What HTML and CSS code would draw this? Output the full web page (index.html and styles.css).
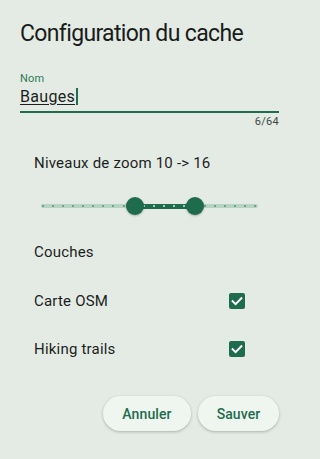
FILE: index.html
```html
<!DOCTYPE html>
<html lang="fr">
<head>
<meta charset="utf-8">
<link rel="stylesheet" href="styles.css">
</head>
<body>
<div class="dialog">
  <h1 class="title">Configuration du cache</h1>
  <div class="field">
    <div class="field-label">Nom</div>
    <div class="field-input"><span class="field-value">Bauges</span><span class="caret"></span></div>
    <div class="field-counter">6/64</div>
  </div>
  <div class="section-label zoom-label">Niveaux de zoom 10 -&gt; 16</div>
  <div class="slider">
    <div class="track">
      <div class="track-active" style="left:93.5px;width:60.8px"></div>
      <div class="dots">
        <i></i><i></i><i></i><i></i><i></i><i></i><i></i><i></i><i></i>
        <i class="on"></i><i class="on"></i><i class="on"></i><i class="on"></i><i class="on"></i><i class="on"></i><i class="on"></i>
        <i></i><i></i><i></i><i></i><i></i><i></i>
      </div>
      <div class="thumb" style="left:93.5px"></div>
      <div class="thumb" style="left:154.3px"></div>
    </div>
  </div>
  <div class="section-label layers-label">Couches</div>
  <div class="row">
    <span class="row-text">Carte OSM</span>
    <span class="checkbox"><svg viewBox="0 0 16 16" width="16" height="16"><path d="M3.6 8.2 L6.6 11.1 L12.4 5.2" fill="none" stroke="#fff" stroke-width="1.9" stroke-linecap="square"/></svg></span>
  </div>
  <div class="row">
    <span class="row-text">Hiking trails</span>
    <span class="checkbox"><svg viewBox="0 0 16 16" width="16" height="16"><path d="M3.6 8.2 L6.6 11.1 L12.4 5.2" fill="none" stroke="#fff" stroke-width="1.9" stroke-linecap="square"/></svg></span>
  </div>
  <div class="actions">
    <button class="btn btn-cancel">Annuler</button>
    <button class="btn btn-save">Sauver</button>
  </div>
</div>
</body>
</html>
```

FILE: styles.css
```css
html, body {
  margin: 0;
  padding: 0;
  background: #e4ebe5;
}
body {
  font-family: Roboto, "Noto Sans", sans-serif;
  color: #1c1f1d;
  width: 300px;
  height: 459px;
  overflow: hidden;
}
.dialog {
  display: flex;
  flex-direction: column;
  padding: 18px 21px 0 20px;
}
.title {
  margin: 0;
  font-size: 23px;
  font-weight: 400;
  line-height: 32px;
  letter-spacing: -0.65px;
  color: #191c1a;
}
.field {
  margin-top: 22px;
  display: flex;
  flex-direction: column;
}
.field-label {
  font-size: 11px;
  line-height: 14px;
  color: #2f7a58;
  letter-spacing: 0.2px;
}
.field-input {
  display: flex;
  align-items: center;
  height: 21px;
  border-bottom: 2px solid #226c4e;
  padding-bottom: 4px;
}
.field-value {
  font-size: 16px;
  line-height: 20px;
  color: #1c1f1d;
  text-decoration: underline;
  text-decoration-thickness: 1px;
  text-underline-offset: 2px;
  letter-spacing: 0.3px;
}
.caret {
  width: 2px;
  height: 17px;
  background: #226c4e;
  margin-left: 1px;
}
.field-counter {
  align-self: flex-end;
  font-size: 11px;
  line-height: 14px;
  margin-top: 2px;
  color: #414843;
  letter-spacing: 0.3px;
}
.section-label {
  padding-left: 14px;
  font-size: 15px;
  line-height: 20px;
  color: #1c1f1d;
  letter-spacing: 0.2px;
}
.zoom-label {
  margin-top: 24px;
}
.slider {
  margin-top: 22px;
  padding-left: 21px;
  height: 22px;
  display: flex;
  align-items: center;
}
.track {
  position: relative;
  width: 217px;
  height: 4px;
  border-radius: 2px;
  background: #b5d4c3;
}
.track-active {
  position: absolute;
  top: -0.5px;
  height: 5px;
  background: #1f6b4e;
}
.dots {
  position: absolute;
  inset: 0;
  display: flex;
  justify-content: space-between;
  align-items: center;
  padding: 0 1.3px 0 0.5px;
}
.dots i {
  width: 2px;
  height: 2px;
  background: #6fa58b;
}
.dots i.on {
  background: #a5cdb9;
}
.thumb {
  position: absolute;
  top: 2px;
  width: 18px;
  height: 18px;
  margin: -9px 0 0 -9px;
  border-radius: 50%;
  background: #1f6b4e;
  box-shadow: 0 1px 2px rgba(0,0,0,0.25);
}
.layers-label {
  margin-top: 25px;
}
.row {
  display: flex;
  align-items: center;
  justify-content: space-between;
  padding-left: 14px;
  padding-right: 34px;
  height: 24px;
  margin-top: 27px;
}
.row + .row {
  margin-top: 24px;
}
.row-text {
  font-size: 15px;
  line-height: 20px;
  letter-spacing: 0.2px;
}
.checkbox {
  width: 16px;
  height: 16px;
  border-radius: 2px;
  background: #1f6b4e;
  display: flex;
}
.actions {
  display: flex;
  justify-content: flex-end;
  gap: 7px;
  margin-top: 35px;
}
.btn {
  height: 35px;
  border: none;
  border-radius: 18px;
  background: #eff5ef;
  box-shadow: 0 1px 3px rgba(0,0,0,0.25);
  font-family: Roboto, "Noto Sans", sans-serif;
  font-size: 14px;
  font-weight: 500;
  color: #226c4e;
  letter-spacing: 0.1px;
  padding: 0;
}
.btn-cancel { width: 88px; }
.btn-save { width: 81px; }
```
